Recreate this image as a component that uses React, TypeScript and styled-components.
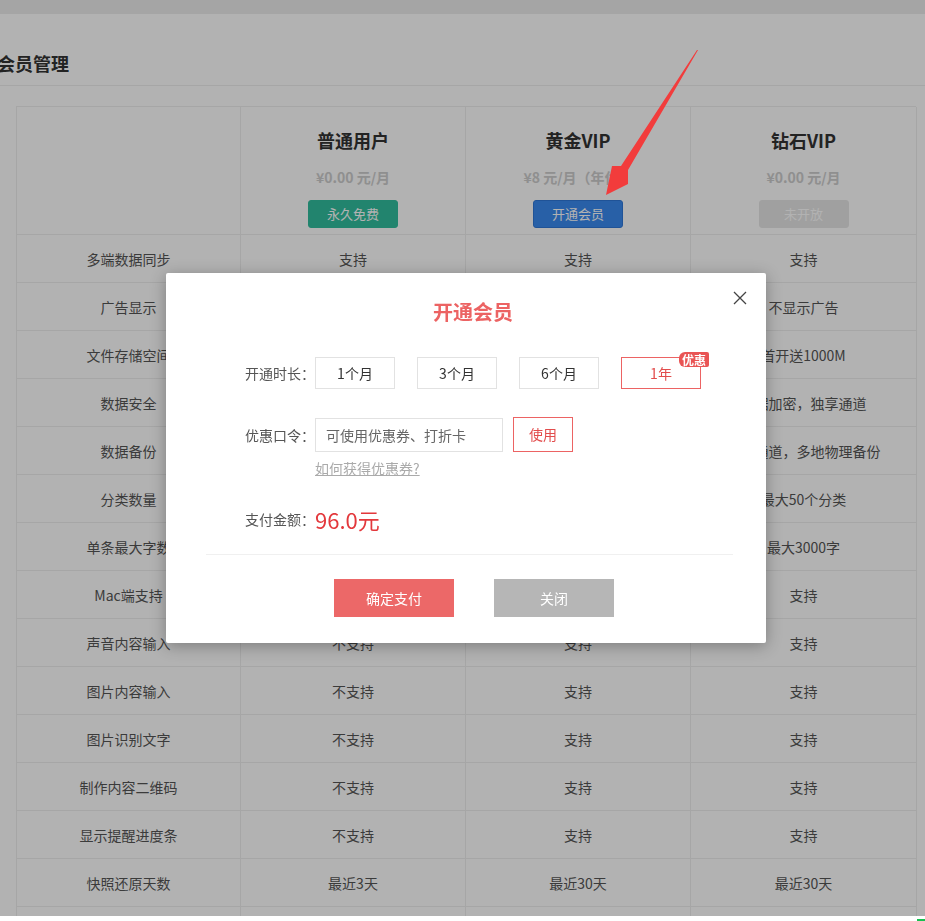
import styled, { createGlobalStyle } from "styled-components";

const GlobalStyle = createGlobalStyle`
  html, body {
    margin: 0;
    padding: 0;
    overflow: hidden;
    background: #fff;
  }
  body {
    font-family: "Noto Sans CJK SC", "Noto Sans", sans-serif;
    color: #555;
  }
`;

const TopStrip = styled.div`
  height: 14px;
  background-color: #ececec;
`;

const Heading = styled.div`
  height: 72px;
  box-sizing: border-box;
  padding-top: 37px;
  border-bottom: 1px solid #eee;
`;

const PageTitle = styled.h2`
  margin: 0 0 0 -3px;
  font-size: 18px;
  line-height: 24px;
  font-weight: bold;
  color: #333;
`;

const TableWrap = styled.div`
  padding: 20px 0 0 16px;
`;

const Grid = styled.div`
  width: 900px;
  display: grid;
  grid-template-columns: 224px 225px 225px 226px;
  border-top: 1px solid #eee;
  border-left: 1px solid #eee;
  box-sizing: border-box;
`;

const HeadCell = styled.div`
  height: 128px;
  box-sizing: border-box;
  padding-top: 21px;
  border-right: 1px solid #eee;
  border-bottom: 1px solid #eee;
  display: flex;
  flex-direction: column;
  align-items: center;
`;

const PlanName = styled.div`
  font-size: 18px;
  line-height: 24px;
  font-weight: bold;
  color: #333;
`;

const PlanPrice = styled.div`
  margin-top: 13px;
  font-size: 14px;
  line-height: 24px;
  font-weight: bold;
  color: #cdcdcd;
`;

const PlanButton = styled.div<{ $bg: string; $line: string }>`
  margin-top: 11px;
  width: 90px;
  height: 28px;
  box-sizing: border-box;
  border: 1px solid ${(p) => p.$line};
  border-radius: 3px;
  background-color: ${(p) => p.$bg};
  color: #fff;
  font-size: 13px;
  line-height: 26px;
  text-align: center;
`;

const Cell = styled.div`
  height: 48px;
  box-sizing: border-box;
  border-right: 1px solid #eee;
  border-bottom: 1px solid #eee;
  display: flex;
  align-items: center;
  justify-content: center;
  font-size: 14px;
  color: #555;
  white-space: nowrap;
`;

const Overlay = styled.div`
  position: fixed;
  inset: 0;
  background-color: rgba(0, 0, 0, 0.3);
  z-index: 10;
`;

const Dialog = styled.div`
  position: fixed;
  left: 166px;
  top: 273px;
  width: 600px;
  box-sizing: border-box;
  padding: 25px 0 26px;
  background-color: #fff;
  border-radius: 2px;
  box-shadow: 0 3px 16px rgba(0, 0, 0, 0.3);
  z-index: 11;
`;

const CloseIcon = styled.svg`
  position: absolute;
  right: 19px;
  top: 18px;
  width: 14px;
  height: 14px;
`;

const DialogTitle = styled.div`
  padding-left: 14px;
  text-align: center;
  font-size: 20px;
  line-height: 28px;
  font-weight: bold;
  color: #ec6363;
`;

const FormRow = styled.div<{ $top: number }>`
  display: flex;
  align-items: center;
  margin-top: ${(p) => p.$top}px;
`;

const Label = styled.div`
  width: 149px;
  text-align: right;
  font-size: 14px;
  color: #555;
`;

const Options = styled.div`
  display: flex;
  gap: 22px;
`;

const Option = styled.div<{ $active?: boolean }>`
  position: relative;
  width: 80px;
  height: 32px;
  box-sizing: border-box;
  border: 1px solid ${(p) => (p.$active ? "#ec6363" : "#e2e2e2")};
  color: ${(p) => (p.$active ? "#e24c4c" : "#333")};
  font-size: 14px;
  line-height: 30px;
  text-align: center;
`;

const Badge = styled.span`
  position: absolute;
  top: -6px;
  right: -9px;
  height: 15px;
  padding: 0 3px;
  border-radius: 6px 2px 2px 6px;
  background-color: #e95454;
  color: #fff;
  font-size: 12px;
  font-weight: bold;
  line-height: 15px;
`;

const CouponInput = styled.input`
  width: 188px;
  height: 34px;
  box-sizing: border-box;
  border: 1px solid #e2e2e2;
  padding: 0 10px;
  font-family: inherit;
  font-size: 14px;
  outline: none;
  &::placeholder {
    color: #666;
  }
`;

const UseButton = styled.div`
  margin-left: 10px;
  width: 60px;
  height: 35px;
  box-sizing: border-box;
  border: 1px solid #ec6363;
  color: #e24c4c;
  font-size: 14px;
  line-height: 33px;
  text-align: center;
`;

const HelpLink = styled.a`
  display: block;
  margin: 6px 0 0 149px;
  font-size: 14px;
  line-height: 20px;
  color: #aaa;
  text-decoration: underline;
`;

const Amount = styled.div`
  font-size: 22px;
  line-height: 30px;
  color: #e3383c;
`;

const Divider = styled.div`
  margin: 20px 33px 0 40px;
  height: 1px;
  background-color: #f0f0f0;
`;

const Footer = styled.div`
  display: flex;
  justify-content: center;
  gap: 40px;
  padding-left: 16px;
  margin-top: 24px;
`;

const FooterButton = styled.div<{ $bg: string }>`
  width: 120px;
  height: 38px;
  background-color: ${(p) => p.$bg};
  color: #fff;
  font-size: 14px;
  line-height: 38px;
  text-align: center;
`;

const ArrowLayer = styled.svg`
  position: fixed;
  left: 0;
  top: 0;
  z-index: 20;
  pointer-events: none;
`;

const BottomStrip = styled.div`
  position: fixed;
  left: 0;
  right: 0;
  bottom: 0;
  height: 5px;
  background-color: #fff;
  z-index: 12;
  display: flex;
  justify-content: flex-end;
  align-items: flex-end;
`;

const GreenMark = styled.span`
  width: 8px;
  height: 2px;
  background-color: #18c050;
`;

const plans = [
  { name: "普通用户", price: "¥0.00 元/月", btn: "永久免费", bg: "#31be9e", line: "#31be9e" },
  { name: "黄金VIP", price: "¥8 元/月（年付）", btn: "开通会员", bg: "#3a8af0", line: "#2f78d8" },
  { name: "钻石VIP", price: "¥0.00 元/月", btn: "未开放", bg: "#e6e6e6", line: "#e6e6e6" },
];

const rows = [
  ["多端数据同步", "支持", "支持", "支持"],
  ["广告显示", "显示广告", "不显示广告", "不显示广告"],
  ["文件存储空间", "100M", "首开送500M", "首开送1000M"],
  ["数据安全", "数据加密", "数据加密，独享通道", "数据加密，独享通道"],
  ["数据备份", "单地备份", "专属通道，多地物理备份", "专属通道，多地物理备份"],
  ["分类数量", "最大10个分类", "最大30个分类", "最大50个分类"],
  ["单条最大字数", "最大500字", "最大2000字", "最大3000字"],
  ["Mac端支持", "不支持", "支持", "支持"],
  ["声音内容输入", "不支持", "支持", "支持"],
  ["图片内容输入", "不支持", "支持", "支持"],
  ["图片识别文字", "不支持", "支持", "支持"],
  ["制作内容二维码", "不支持", "支持", "支持"],
  ["显示提醒进度条", "不支持", "支持", "支持"],
  ["快照还原天数", "最近3天", "最近30天", "最近30天"],
  ["历史版本", "不支持", "支持", "支持"],
];

const durations = ["1个月", "3个月", "6个月", "1年"];

export default function App() {
  return (
    <>
      <GlobalStyle />
      <TopStrip />
      <Heading>
        <PageTitle>会员管理</PageTitle>
      </Heading>
      <TableWrap>
        <Grid>
          <HeadCell />
          {plans.map((plan) => (
            <HeadCell key={plan.name}>
              <PlanName>{plan.name}</PlanName>
              <PlanPrice>{plan.price}</PlanPrice>
              <PlanButton $bg={plan.bg} $line={plan.line}>
                {plan.btn}
              </PlanButton>
            </HeadCell>
          ))}
          {rows.map((row) =>
            row.map((text, i) => <Cell key={row[0] + i}>{text}</Cell>)
          )}
        </Grid>
      </TableWrap>

      <Overlay />

      {/* 开通会员弹窗 */}
      <Dialog>
        <CloseIcon viewBox="0 0 14 14">
          <path d="M1 1L13 13M13 1L1 13" stroke="#444" strokeWidth="1.3" fill="none" />
        </CloseIcon>
        <DialogTitle>开通会员</DialogTitle>

        <FormRow $top={31}>
          <Label>开通时长：</Label>
          <Options>
            {durations.map((d, i) => (
              <Option key={d} $active={i === 3}>
                {d}
                {i === 3 ? <Badge>优惠</Badge> : null}
              </Option>
            ))}
          </Options>
        </FormRow>

        <FormRow $top={28}>
          <Label>优惠口令：</Label>
          <CouponInput placeholder="可使用优惠券、打折卡" />
          <UseButton>使用</UseButton>
        </FormRow>
        <HelpLink>如何获得优惠券?</HelpLink>

        <FormRow $top={26}>
          <Label>支付金额：</Label>
          <Amount>96.0元</Amount>
        </FormRow>

        <Divider />

        <Footer>
          <FooterButton $bg="#ec6868">确定支付</FooterButton>
          <FooterButton $bg="#b6b6b6">关闭</FooterButton>
        </Footer>
      </Dialog>

      {/* 标注箭头 */}
      <ArrowLayer width="925" height="921" viewBox="0 0 925 921">
        <polygon
          points="698,50 628,170 628,184 606,195 612,166 621,166 697,50"
          fill="#f23c3c"
        />
      </ArrowLayer>

      <BottomStrip>
        <GreenMark />
      </BottomStrip>
    </>
  );
}
